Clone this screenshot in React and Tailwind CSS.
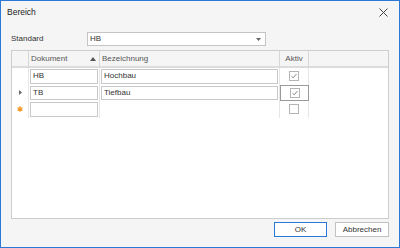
import React from 'react';

const rows = [
  { doc: 'HB', name: 'Hochbau', aktiv: true, marker: null },
  { doc: 'TB', name: 'Tiefbau', aktiv: true, marker: 'current' },
  { doc: '', name: null, aktiv: false, marker: 'new' },
];

const font = { fontFamily: '"Liberation Sans", Arial, sans-serif' };

const Check = ({ checked }) => (
  <div className="w-[10px] h-[10px] border border-[#b4b4b4] bg-white flex items-center justify-center">
    {checked && (
      <svg width="8" height="8" viewBox="0 0 8 8">
        <path d="M1.5 4.2 L3.2 5.8 L6.5 2" fill="none" stroke="#8a8a8a" strokeWidth="1" />
      </svg>
    )}
  </div>
);

const App = () => {
  return (
    <div
      className="w-[400px] h-[248px] border border-[#2b79d7] bg-[#f5f5f5] flex flex-col text-[8px] text-[#333]"
      style={font}
    >
      {/* Title bar */}
      <div className="h-[22px] flex items-center justify-between pl-[6px] pr-[11px] pt-[1px]">
        <span className="text-[8.5px] text-[#222]">Bereich</span>
        <svg width="9" height="9" viewBox="0 0 9 9">
          <path d="M0.5 0.5 L8.5 8.5 M8.5 0.5 L0.5 8.5" stroke="#444" strokeWidth="1" />
        </svg>
      </div>

      <div className="flex-1 flex flex-col px-[10px]">
        {/* Standard */}
        <div className="flex items-center mt-[9px] h-[14px]">
          <span className="w-[76px]">Standard</span>
          <div className="w-[179px] h-[14px] bg-white border border-[#c4c4c4] flex items-center justify-between pl-[2px] pr-[4px]">
            <span>HB</span>
            <svg width="5" height="3" viewBox="0 0 5 3">
              <path d="M0 0 L5 0 L2.5 3 Z" fill="#666" />
            </svg>
          </div>
        </div>

        {/* Grid */}
        <div className="mt-[4px] h-[169px] border border-[#cdcdcd] bg-white flex flex-col">
          <div className="grid grid-cols-[17px_71px_180px_29px_1fr] h-[17px] bg-[#f5f5f5] border-b-2 border-[#dcdcdc] text-[#555]">
            <div className="border-r border-[#d6d6d6]" />
            <div className="border-r border-[#d6d6d6] flex items-center justify-between pl-[2px] pr-[3px]">
              <span>Dokument</span>
              <svg width="6" height="4" viewBox="0 0 6 4">
                <path d="M0 4 L6 4 L3 0 Z" fill="#555" />
              </svg>
            </div>
            <div className="border-r border-[#d6d6d6] flex items-center pl-[2px]">Bezeichnung</div>
            <div className="border-r border-[#d6d6d6] flex items-center justify-center">Aktiv</div>
            <div />
          </div>

          {rows.map((r, i) => (
            <div key={i} className="grid grid-cols-[17px_71px_180px_29px_1fr] h-[16.5px]">
              <div className="border-r border-[#e6e6e6] flex items-center justify-center">
                {r.marker === 'current' && (
                  <svg width="3" height="5" viewBox="0 0 3 5">
                    <path d="M0 0 L3 2.5 L0 5 Z" fill="#666" />
                  </svg>
                )}
                {r.marker === 'new' && (
                  <svg width="6" height="6" viewBox="0 0 6 6">
                    <path d="M3 0.3 V5.7 M0.6 1.6 L5.4 4.4 M5.4 1.6 L0.6 4.4" stroke="#f39a2e" strokeWidth="1.3" />
                  </svg>
                )}
              </div>
              <div className="border-r border-[#e6e6e6] p-[1px]">
                <div className="h-full border border-[#c8c8c8] bg-white flex items-center pl-[2px]">{r.doc}</div>
              </div>
              <div className="border-r border-[#e6e6e6] p-[1px]">
                {r.name !== null && (
                  <div className="h-full border border-[#c8c8c8] bg-white flex items-center pl-[2px]">{r.name}</div>
                )}
              </div>
              <div
                className={
                  r.marker === 'current'
                    ? 'border border-[#9a9a9a] flex items-center justify-center'
                    : 'border-r border-[#e6e6e6] flex items-center justify-center'
                }
              >
                <Check checked={r.aktiv} />
              </div>
              <div />
            </div>
          ))}
        </div>

        {/* Buttons */}
        <div className="flex justify-end gap-[8px] mt-[3px]">
          <button className="w-[53px] h-[15px] border border-[#2b79d7] bg-white text-[8px] text-[#333] flex items-center justify-center">
            OK
          </button>
          <button className="w-[54px] h-[15px] border border-[#c2c2c2] bg-white text-[8px] text-[#333] flex items-center justify-center">
            Abbrechen
          </button>
        </div>
      </div>
    </div>
  );
};

export default App;
